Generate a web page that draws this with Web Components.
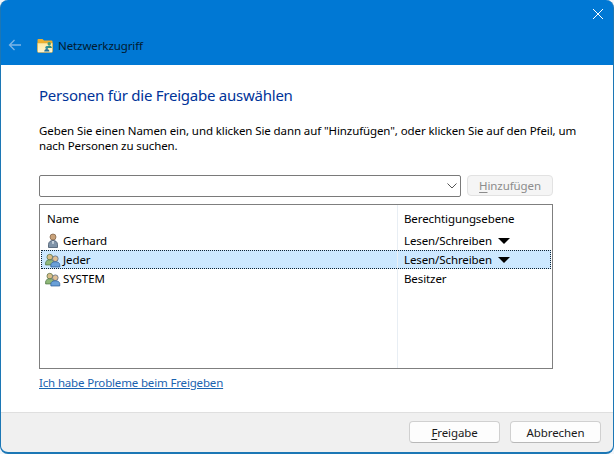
<!DOCTYPE html>
<html lang="de">
<head>
<meta charset="utf-8">
<title>Netzwerkzugriff</title>
<style>
  html, body { margin: 0; padding: 0; background: #f3f6fa; }
  body { font: 11.5px "Noto Sans", "Open Sans", sans-serif; letter-spacing: -0.1px; color: #000; }
</style>
</head>
<body>
<share-dialog>
  <user-row name="Gerhard" level="Lesen/Schreiben" icon="user" menu></user-row>
  <user-row name="Jeder" level="Lesen/Schreiben" icon="group" menu selected></user-row>
  <user-row name="SYSTEM" level="Besitzer" icon="group"></user-row>
</share-dialog>

<script>
const ICONS = {
    user: `<svg width="16" height="16" viewBox="0 0 16 16">
        <circle cx="8" cy="4" r="3" fill="#c9a27a" stroke="#7a5c40" stroke-width=".7"/>
        <path d="M3.5 14.5v-3C3.5 9 5.5 7.4 8 7.4s4.5 1.6 4.5 4.1v3z" fill="#7f93a8" stroke="#44566b" stroke-width=".8"/>
        <path d="M7.2 8h1.6l-.3 3h-1z" fill="#e4ebf2"/>
    </svg>`,
    group: `<svg width="16" height="15" viewBox="0 0 18 16">
        <circle cx="5.4" cy="4.2" r="3.2" fill="#d8bd8a" stroke="#55703f" stroke-width=".8"/>
        <path d="M.7 13v-2.5c0-2 2.1-3.2 4.7-3.2s4.6 1.2 4.6 3.2V13z" fill="#8fb878" stroke="#46703c" stroke-width=".8"/>
        <circle cx="11.6" cy="6" r="3.2" fill="#dfbf95" stroke="#4d5f78" stroke-width=".8"/>
        <path d="M6.6 15.3v-2.6c0-2 2.2-3.3 5-3.3s5 1.3 5 3.3v2.6z" fill="#6aa0d8" stroke="#2c5a94" stroke-width=".8"/>
    </svg>`
};

class UserRow extends HTMLElement {
    constructor() {
        super();
        const shadow = this.attachShadow({ mode: 'open' });
        const menu = this.hasAttribute('menu') ? '<span class="arrow"></span>' : '';
        shadow.innerHTML = `
            <style>
                :host {
                    display: grid;
                    grid-template-columns: 357px 1fr;
                    height: 19px;
                    line-height: 18px;
                    box-sizing: border-box;
                    border: 1px solid transparent;
                }
                :host([selected]) {
                    background: #cce8ff;
                    border: 1px dotted #0d2233;
                }
                .name { display: flex; align-items: center; padding-left: 3px; }
                .icon { width: 18px; height: 16px; display: flex; align-items: center; }
                .level { display: flex; align-items: center; padding-left: 5px; }
                .arrow {
                    margin-left: 6px;
                    border-left: 6px solid transparent;
                    border-right: 6px solid transparent;
                    border-top: 6px solid #000;
                }
            </style>
            <div class="name"><span class="icon">${ICONS[this.getAttribute('icon')]}</span><span>${this.getAttribute('name')}</span></div>
            <div class="level"><span>${this.getAttribute('level')}</span>${menu}</div>
        `;
    }
}

class DialogButton extends HTMLElement {
    constructor() {
        super();
        const shadow = this.attachShadow({ mode: 'open' });
        shadow.innerHTML = `
            <style>
                :host {
                    display: flex;
                    align-items: center;
                    justify-content: center;
                    box-sizing: border-box;
                    height: 22px;
                    width: 91px;
                    background: #fdfdfd;
                    border: 1px solid #d0d0d0;
                    border-bottom-color: #b8b8b8;
                    border-radius: 4px;
                    color: #1a1a1a;
                }
                :host([disabled]) {
                    width: 86px;
                    height: 21px;
                    background: #f5f5f5;
                    border-color: #e2e2e2;
                    color: #8c8c8c;
                }
            </style>
            <slot></slot>
        `;
    }
}

class ShareDialog extends HTMLElement {
    constructor() {
        super();
        const shadow = this.attachShadow({ mode: 'open' });
        shadow.innerHTML = `
            <style>
                :host {
                    display: flex;
                    flex-direction: column;
                    width: 614px;
                    height: 454px;
                    box-sizing: border-box;
                    background: #0078d4;
                    border-radius: 8px;
                    overflow: hidden;
                    border-bottom: 2px solid #1c77b5;
                    border-left: 1px solid #1c77b5;
                    border-right: 1px solid #1c77b5;
                }
                header { height: 65px; display: flex; flex-direction: column; flex: none; }
                .close { display: flex; justify-content: flex-end; padding: 9px 10px 0 0; height: 29px; box-sizing: border-box; }
                .nav { display: flex; align-items: center; padding: 6px 0 0 7px; height: 20px; }
                .nav .back { margin-right: 15px; display: block; }
                .nav .folder { margin-right: 5px; display: block; }
                .nav span { color: #021a30; }
                main { flex: 1; background: #fff; padding: 0 60px 0 38px; display: flex; flex-direction: column; }
                h1 { font-size: 15px; letter-spacing: -0.24px; font-weight: 400; color: #003399; margin: 20px 0 0; line-height: 21px; }
                p { margin: 18px 0 0; line-height: 14.5px; height: 30px; width: 540px; }
                .pick { display: flex; gap: 6px; margin-top: 21px; height: 22px; width: 514px; }
                .combo {
                    width: 422px;
                    height: 22px;
                    box-sizing: border-box;
                    border: 1px solid #7a7a7a;
                    border-radius: 2px;
                    display: flex;
                    justify-content: flex-end;
                    align-items: center;
                    padding-right: 3px;
                }
                u { text-underline-offset: 2px; }
                .list {
                    margin-top: 7px;
                    width: 514px;
                    height: 165px;
                    box-sizing: border-box;
                    border: 1px solid #7f7f7f;
                    padding: 1px;
                    position: relative;
                }
                .cols {
                    display: grid;
                    grid-template-columns: 357px 1fr;
                    height: 23px;
                    align-items: center;
                    margin: 1px 0;
                }
                .cols span { padding-left: 6px; }
                /* lies over the rows, the column line of the list */
                .divider { position: absolute; left: 357px; top: 0; bottom: 0; width: 1px; background: #e8eef4; }
                a { color: #1a63b0; text-decoration: underline; margin-top: 6px; line-height: 16px; letter-spacing: -0.16px; }
                footer {
                    flex: none;
                    height: 40px;
                    background: #f0f0f0;
                    border-top: 1px solid #dfdfdf;
                    display: flex;
                    justify-content: flex-end;
                    gap: 10px;
                    padding: 8px 12px 0 0;
                    box-sizing: border-box;
                }
            </style>
            <header>
                <div class="close">
                    <svg width="10" height="10" viewBox="0 0 10 10"><path d="M0 0l10 10M10 0L0 10" stroke="#fff" stroke-width="1"/></svg>
                </div>
                <div class="nav">
                    <svg class="back" width="14" height="12" viewBox="0 0 14 12"><path d="M13 6H1.5M6.5 1L1.5 6l5 5" fill="none" stroke="#7db5e6" stroke-width="1.3"/></svg>
                    <svg class="folder" width="16" height="15" viewBox="0 0 16 15">
                        <defs><linearGradient id="fold" x1="0" y1="0" x2="0" y2="1"><stop offset="0" stop-color="#fdeaa6"/><stop offset="1" stop-color="#fff4cf"/></linearGradient></defs>
                        <path d="M0.5 2a1 1 0 0 1 1-1h4l1.5 1.5h7.5a1 1 0 0 1 1 1v9a1 1 0 0 1-1 1h-13a1 1 0 0 1-1-1z" fill="#eeb02f"/>
                        <path d="M0.5 5h15v8.500a1 1 0 0 1-1 1h-13a1 1 0 0 1-1-1z" fill="url(#fold)" stroke="#d9a93a" stroke-width=".5"/>
                        <circle cx="12.200" cy="5.800" r="1.700" fill="#3f9a7a"/>
                        <path d="M9.500 10c0-1.600 1.100-2.500 2.700-2.500s2.700.9 2.700 2.500z" fill="#2f8f7f"/>
                        <circle cx="9.800" cy="9.500" r="1.500" fill="#2c8fa0"/>
                        <path d="M7.200 13.500c0-1.500 1-2.400 2.600-2.400s2.600.9 2.600 2.400z" fill="#1f6f9a"/>
                    </svg>
                    <span>Netzwerkzugriff</span>
                </div>
            </header>
            <main>
                <h1>Personen für die Freigabe auswählen</h1>
                <p>Geben Sie einen Namen ein, und klicken Sie dann auf "Hinzufügen", oder klicken Sie auf den Pfeil, um nach Personen zu suchen.</p>
                <div class="pick">
                    <div class="combo"><svg width="10" height="6" viewBox="0 0 10 6"><path d="M.5.5L5 5 9.5.5" fill="none" stroke="#555" stroke-width="1"/></svg></div>
                    <dialog-button disabled><u>H</u>inzufügen</dialog-button>
                </div>
                <div class="list">
                    <div class="divider"></div>
                    <div class="cols"><span>Name</span><span>Berechtigungsebene</span></div>
                    <slot></slot>
                </div>
                <a href="#">Ich habe Probleme beim Freigeben</a>
            </main>
            <footer>
                <dialog-button><u>F</u>reigabe</dialog-button>
                <dialog-button>Abbrechen</dialog-button>
            </footer>
        `;
    }
}

customElements.define('user-row', UserRow);
customElements.define('dialog-button', DialogButton);
customElements.define('share-dialog', ShareDialog);
</script>
</body>
</html>
